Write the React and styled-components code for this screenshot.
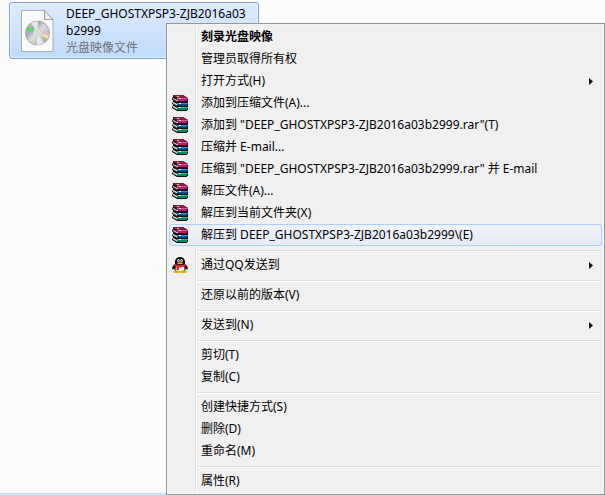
import React from 'react'
import styled, { createGlobalStyle } from 'styled-components'

const GlobalStyle = createGlobalStyle`
  * {
    box-sizing: border-box;
  }

  body {
    margin: 0;
    background: #fcfcfc;
    color: #000;
    font-family: 'Noto Sans', 'Noto Sans CJK SC', sans-serif;
    font-size: 12px;
  }
`

const Page = styled.main`
  position: relative;
  display: flex;
  flex-direction: column;
  min-height: 100vh;
  overflow: hidden;
`

const FileGrid = styled.div`
  flex: 1;
  display: grid;
  grid-template-columns: repeat(auto-fill, 250px);
  align-content: start;
  padding: 2px 9px;
`

const FileTile = styled.button`
  display: flex;
  align-items: center;
  gap: 12px;
  height: 57px;
  padding: 0 4px 0 11px;
  border: 1px solid #7da2ce;
  border-radius: 3px;
  background: linear-gradient(#dcebfc, #c1dbfc);
  box-shadow: inset 0 0 0 1px rgba(255, 255, 255, 0.5);
  color: inherit;
  font: inherit;
  text-align: left;
`

const FileInfo = styled.span`
  display: flex;
  flex-direction: column;
  line-height: 17px;
  white-space: nowrap;
`

const FileType = styled.span`
  color: #6d7378;
  line-height: 18px;
`

const StatusEdge = styled.footer`
  height: 2px;
  background: #d6e5f5;
  border-top: 1px solid #ccd9e9;
`

const Menu = styled.div`
  position: absolute;
  top: 23px;
  right: 0;
  left: 166px;
  padding: 2px;
  border: 1px solid #979797;
  background: linear-gradient(90deg, transparent 28px, #e2e3e3 28px, #e2e3e3 29px, #fff 29px, #fff 30px, transparent 30px) 0 2px / 100% calc(100% - 4px) no-repeat, #f0f0f0;
  box-shadow: inset 0 0 0 1px #f5f5f5;
`

const MenuItem = styled.button`
  display: grid;
  grid-template-columns: 18px 1fr auto;
  column-gap: 12px;
  align-items: center;
  width: 100%;
  height: 22px;
  padding: 0 8px 0 1px;
  border: 1px solid ${props => props.$active ? '#aecff7' : 'transparent'};
  border-radius: 3px;
  background: ${props => props.$active ? 'linear-gradient(rgba(242, 245, 250, 0.8), rgba(226, 234, 247, 0.8))' : 'none'};
  color: inherit;
  font: inherit;
  font-weight: ${props => props.$bold ? 700 : 400};
  line-height: 20px;
  text-align: left;
  white-space: pre;
`

const IconSlot = styled.span`
  display: flex;
  justify-content: center;
`

const Separator = styled.hr`
  height: 2px;
  margin: 4px 0 2px 28px;
  border: 0;
  border-top: 1px solid #e0e0e0;
  background: #fff;
`

const Svg = styled.svg`
  display: block;
  flex: none;
`

function DiscFileIcon() {
  return (
    <Svg width="33" height="42" viewBox="0 0 33 42" aria-hidden="true">
      <defs>
        <linearGradient id="disc" x1="0" y1="0" x2="1" y2="1">
          <stop offset="0" stopColor="#dcdcdc" />
          <stop offset="0.3" stopColor="#a5a5a5" />
          <stop offset="0.5" stopColor="#dedede" />
          <stop offset="0.75" stopColor="#b8b8b8" />
          <stop offset="1" stopColor="#989898" />
        </linearGradient>
      </defs>
      <path d="M0.5 0.5H23.5L32 9.5V41.5H0.5Z" fill="#fafafa" stroke="#a9adb3" />
      <path d="M23.5 0.5V9.5H32Z" fill="#e9ebed" stroke="#999ea5" />
      <circle cx="16.5" cy="23" r="12" fill="url(#disc)" stroke="#949494" strokeWidth="0.7" />
      <path d="M16.5 23L10 12.9A12 12 0 0 1 17 11.2Z" fill="#f5f5f5" opacity="0.8" />
      <path d="M16.5 23L16 34.9A12 12 0 0 0 23 33Z" fill="#f2f2f2" opacity="0.8" />
      <path d="M16.5 23L5 20.5A12 12 0 0 1 6.6 16.6Z" fill="#4be04f" />
      <path d="M16.5 23L4.7 23.5A12 12 0 0 1 5 20.2Z" fill="#b9a1d3" />
      <path d="M16.5 23L28 24.5A12 12 0 0 1 26.5 29Z" fill="#efe1a8" />
      <path d="M16.5 23L28.3 22.5A12 12 0 0 1 28 25Z" fill="#dfb5d8" />
      <circle cx="16.5" cy="23" r="4.5" fill="#d5d5d5" />
      <circle cx="16.5" cy="23" r="2.6" fill="#bcbcbc" stroke="#f6f6f6" />
      <circle cx="16.5" cy="23" r="1" fill="#f4f4f4" />
    </Svg>
  )
}

function ArchiveIcon() {
  return (
    <Svg width="16" height="16" viewBox="0 0 16 16" aria-hidden="true">
      <path d="M1 8.5L5 11H16V15H15V16H5L0 13V12L1 11Z" fill="#101010" />
      <path d="M5 12H16V13H5Z" fill="#35bb86" />
      <path d="M5 13H15V15H5Z" fill="#058a5b" />
      <path d="M1 4.5L5 7H16V11H5L0 9V8L1 7Z" fill="#101020" />
      <path d="M5 8H16V9H5Z" fill="#3a8bcb" />
      <path d="M5 9H15V10H5Z" fill="#0861ad" />
      <path d="M5 10H15V11H5Z" fill="#07376d" />
      <path d="M1 0H11L16 3V7H5L0 4.5V3L1 2Z" fill="#30071c" />
      <path d="M2 0H11L15 3H5L1 1Z" fill="#8b1a46" />
      <path d="M5 3H16V4H5Z" fill="#d9599c" />
      <path d="M5 4H15V6H5Z" fill="#bd176f" />
      <path d="M1 3L5 5V6L1 4ZM1 7L5 9V10.5L1 8.5ZM1 11L5 13V14.5L1 12.5Z" fill="#fff" />
      <path d="M1 4L5 6.5M1 8L5 10.5M1 12L5 14.5" fill="none" stroke="#5c5c5c" strokeWidth="0.4" />
      <path d="M7 3H9V4H7ZM7 8H9V9H7ZM7 12H9V13H7Z" fill="#fff1ef" />
      <path d="M5 1H7V2H5ZM5 5H6V6H5Z" fill="#e9c85d" />
    </Svg>
  )
}

function PenguinIcon() {
  return (
    <Svg width="16" height="16" viewBox="0 0 16 16" aria-hidden="true">
      <path d="M3.2 6.5L0.3 10V12.8L3 11.5ZM12.8 6.5L15.7 10V12.8L13 11.5Z" fill="#080808" />
      <ellipse cx="8" cy="10.5" rx="6" ry="4.8" fill="#080808" />
      <ellipse cx="8" cy="11.2" rx="4.5" ry="4" fill="#fff" />
      <ellipse cx="4.5" cy="14.8" rx="3.4" ry="1.2" fill="#f6a800" />
      <ellipse cx="11.5" cy="14.8" rx="3.4" ry="1.2" fill="#f6a800" />
      <path d="M3 7V4.5A5 4.5 0 0 1 13 4.5V7Q8 9 3 7Z" fill="#080808" />
      <ellipse cx="6.5" cy="3.6" rx="1.2" ry="1.6" fill="#fff" />
      <ellipse cx="9.5" cy="3.6" rx="1.2" ry="1.6" fill="#fff" />
      <circle cx="6.8" cy="3.8" r="0.6" fill="#000" />
      <circle cx="9.3" cy="3.8" r="0.6" fill="#000" />
      <ellipse cx="8" cy="6.2" rx="3" ry="0.9" fill="#f6a800" />
      <path d="M2.5 7Q8 9 13.5 7L13.8 8.8Q10 10.8 7 10.3V13H4.5V9.8L2.2 8.8Z" fill="#ee1c22" />
    </Svg>
  )
}

function SubmenuArrow() {
  return (
    <Svg width="4" height="7" viewBox="0 0 4 7" aria-hidden="true">
      <path d="M0 0L4 3.5L0 7Z" fill="#111" />
    </Svg>
  )
}

const icons = {
  archive: <ArchiveIcon />,
  penguin: <PenguinIcon />
}

const menuGroups = [
  [
    { label: '刻录光盘映像', bold: true },
    { label: '管理员取得所有权' },
    { label: '打开方式(H)', submenu: true },
    { label: '添加到压缩文件(A)...', icon: 'archive' },
    { label: '添加到 "DEEP_GHOSTXPSP3-ZJB2016a03b2999.rar"(T)', icon: 'archive' },
    { label: '压缩并 E-mail...', icon: 'archive' },
    { label: '压缩到 "DEEP_GHOSTXPSP3-ZJB2016a03b2999.rar" 并 E-mail', icon: 'archive' },
    { label: '解压文件(A)...', icon: 'archive' },
    { label: '解压到当前文件夹(X)', icon: 'archive' },
    { label: '解压到 DEEP_GHOSTXPSP3-ZJB2016a03b2999\\(E)', icon: 'archive', active: true }
  ],
  [{ label: '通过QQ发送到', icon: 'penguin', submenu: true }],
  [{ label: '还原以前的版本(V)' }],
  [{ label: '发送到(N)', submenu: true }],
  [{ label: '剪切(T)' }, { label: '复制(C)' }],
  [{ label: '创建快捷方式(S)' }, { label: '删除(D)' }, { label: '重命名(M)' }],
  [{ label: '属性(R)' }]
]

function App() {
  return (
    <Page lang="zh-CN">
      <GlobalStyle />
      <FileGrid>
        <FileTile type="button">
          <DiscFileIcon />
          <FileInfo>
            <span>DEEP_GHOSTXPSP3-ZJB2016a03<br />b2999</span>
            <FileType>光盘映像文件</FileType>
          </FileInfo>
        </FileTile>
      </FileGrid>
      <StatusEdge />
      <Menu role="menu">
        {menuGroups.map((group, index) => (
          <React.Fragment key={index}>
            {index > 0 && <Separator />}
            {group.map(item => (
              <MenuItem
                key={item.label}
                type="button"
                role="menuitem"
                aria-haspopup={item.submenu ? 'menu' : undefined}
                $active={item.active}
                $bold={item.bold}
              >
                <IconSlot>{icons[item.icon]}</IconSlot>
                <span>{item.label}</span>
                {item.submenu && <SubmenuArrow />}
              </MenuItem>
            ))}
          </React.Fragment>
        ))}
      </Menu>
    </Page>
  )
}

export default App
